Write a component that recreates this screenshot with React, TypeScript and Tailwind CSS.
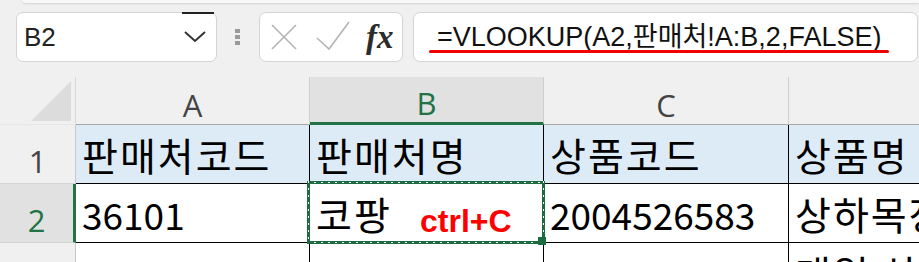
import React from "react"

const ui = { fontFamily: '"Liberation Sans", "Noto Sans CJK KR", sans-serif' }
const kr = { fontFamily: '"Noto Sans CJK KR", "Liberation Sans", sans-serif' }
const hdr = { fontFamily: '"Open Sans", "Liberation Sans", sans-serif' }

function Chevron() {
  return (
    <svg width="24" height="14" viewBox="0 0 24 14" fill="none">
      <path d="M2 2 L12 11 L22 2" stroke="#333" strokeWidth="2" />
    </svg>
  )
}

function CancelIcon() {
  return (
    <svg width="26" height="26" viewBox="0 0 26 26" fill="none">
      <path d="M1 1 L25 25 M25 1 L1 25" stroke="#b4b4b4" strokeWidth="1.6" />
    </svg>
  )
}

function CheckIcon() {
  return (
    <svg width="34" height="30" viewBox="0 0 34 30" fill="none">
      <path d="M1 17 L13 28 L33 1" stroke="#b4b4b4" strokeWidth="1.6" />
    </svg>
  )
}

function Corner() {
  return (
    <svg width="40" height="40" viewBox="0 0 40 40">
      <polygon points="40,0 40,40 0,40" fill="#dcdcdc" />
    </svg>
  )
}

function Toolbar() {
  return (
    <div className="flex items-start h-[63px] pt-[12px]">
      <div className="relative shrink-0 ml-[16px] w-[201px] h-[50px] bg-white border border-[#d4d4d4] rounded-[7px] flex items-center justify-between pl-[7px] pr-[9px]">
        <div className="absolute top-[-1px] left-[165px] w-[32px] h-[2px] bg-[#222]" />
        <span className="text-[26px] text-[#222] leading-none" style={ui}>B2</span>
        <Chevron />
      </div>
      <div className="shrink-0 ml-[18px] h-[50px] flex flex-col items-center justify-center gap-[2px]">
        <div className="w-[5px] h-[4px] bg-[#9a9a9a]" />
        <div className="w-[5px] h-[4px] bg-[#9a9a9a]" />
        <div className="w-[5px] h-[4px] bg-[#9a9a9a]" />
      </div>
      <div className="shrink-0 ml-[19px] w-[144px] h-[50px] bg-white border border-[#d4d4d4] rounded-[7px] flex items-center pl-[11px]">
        <CancelIcon />
        <div className="ml-[19px] mt-[-2px]">
          <CheckIcon />
        </div>
        <span
          className="ml-[16px] text-[33px] italic text-[#2b2b2b] leading-none font-bold"
          style={{ fontFamily: '"Liberation Serif", "DejaVu Serif", serif' }}
        >
          fx
        </span>
      </div>
      <div className="relative ml-[10px] flex-1 min-w-0 mr-[1px] h-[50px] bg-white border border-[#d4d4d4] rounded-[7px] flex items-center pl-[23px]">
        <span className="text-[27px] text-[#111] leading-none whitespace-nowrap" style={ui}>
          =VLOOKUP(A2,판매처!A:B,2,FALSE)
        </span>
        <div className="absolute left-[15px] top-[37px] w-[460px] h-[3px] rounded-full bg-[#f00000]" />
      </div>
    </div>
  )
}

function ColHeader({ label, active, w, last }: { label: string; active?: boolean; w: string; last?: boolean }) {
  return (
    <div
      className={
        "h-[48px] flex items-end justify-center pb-[3px] text-[31px] leading-none " +
        w +
        (last ? " min-w-0" : " shrink-0 border-r border-[#cfcfcf]") +
        (active
          ? " bg-[#e1e1e1] border-b-[3px] border-b-[#217346] text-[#217346]"
          : " bg-[#f0f0f0] border-b border-b-[#a6a6a6] text-[#444]")
      }
      style={hdr}
    >
      {label}
    </div>
  )
}

function RowHeader({ n, active }: { n: string; active?: boolean }) {
  return (
    <div
      className={
        "shrink-0 w-[76px] flex items-end justify-center pb-[6px] text-[31px] leading-none border-b " +
        (active
          ? "bg-[#e1e1e1] border-r-[3px] border-r-[#217346] border-b-[#d4d4d4] text-[#217346]"
          : "bg-[#f0f0f0] border-r border-r-[#c8c8c8] border-b-[#d4d4d4] text-[#444]")
      }
      style={hdr}
    >
      {n}
    </div>
  )
}

function Cell({
  w,
  children,
  blue,
  last,
  num,
  top,
}: {
  w: string
  children?: React.ReactNode
  blue?: boolean
  last?: boolean
  num?: boolean
  top?: boolean
}) {
  return (
    <div
      className={
        "relative flex items-center pl-[6px] border-b border-black text-black leading-none whitespace-nowrap " +
        w +
        (top ? " z-10" : "") +
        (num ? " text-[37px] pt-[2px]" : " text-[39px] tracking-[2px]") +
        (last ? " min-w-0 overflow-hidden" : " shrink-0 border-r") +
        (blue ? " bg-[#ddebf7]" : " bg-white")
      }
      style={kr}
    >
      {children}
    </div>
  )
}

// copy-mode outline: 3px green bars with a white dashed line running down the middle
function MarchingAnts() {
  return (
    <div className="absolute -left-[3px] -top-[3px] -right-[2px] -bottom-[2px] pointer-events-none">
      <div className="absolute left-0 right-0 top-0 h-[3px] bg-[#1d6b40] flex items-center">
        <div className="w-full h-[1px] bg-[repeating-linear-gradient(90deg,#ffffff_0px,#ffffff_2px,transparent_2px,transparent_7px)]" />
      </div>
      <div className="absolute left-0 right-0 bottom-0 h-[3px] bg-[#1d6b40] flex items-center">
        <div className="w-full h-[1px] bg-[repeating-linear-gradient(90deg,#ffffff_0px,#ffffff_2px,transparent_2px,transparent_7px)]" />
      </div>
      <div className="absolute top-0 bottom-0 left-0 w-[3px] bg-[#1d6b40] flex justify-center">
        <div className="h-full w-[1px] bg-[repeating-linear-gradient(180deg,#ffffff_0px,#ffffff_2px,transparent_2px,transparent_7px)]" />
      </div>
      <div className="absolute top-0 bottom-0 right-0 w-[3px] bg-[#1d6b40] flex justify-center">
        <div className="h-full w-[1px] bg-[repeating-linear-gradient(180deg,#ffffff_0px,#ffffff_2px,transparent_2px,transparent_7px)]" />
      </div>
    </div>
  )
}

export default function App() {
  return (
    <div className="w-[919px] h-[262px] overflow-hidden bg-[#f0f0f0]">
      <div className="h-0">
        <div className="ml-[22px] h-[3px] rounded-bl-[6px] bg-[#f8f8f8] shadow-[0_1px_2px_rgba(0,0,0,0.12)]" />
      </div>
      <Toolbar />
      <div className="h-[14px]" />
      <div className="flex">
        <div className="shrink-0 w-[76px] h-[48px] flex items-end justify-end pr-[4px] pb-[3px] border-r border-[#d8d8d8] border-b border-b-[#e6e6e6]">
          <Corner />
        </div>
        <ColHeader label="A" w="w-[234px]" />
        <ColHeader label="B" w="w-[234px]" active />
        <ColHeader label="C" w="w-[245px]" />
        <ColHeader label="" w="flex-1" last />
      </div>
      <div className="flex h-[59px]">
        <RowHeader n="1" />
        <Cell w="w-[234px]" blue>판매처코드</Cell>
        <Cell w="w-[234px]" blue>판매처명</Cell>
        <Cell w="w-[245px]" blue>상품코드</Cell>
        <Cell w="flex-1" blue last>상품명</Cell>
      </div>
      <div className="flex h-[59px]">
        <RowHeader n="2" active />
        <Cell w="w-[234px]" num>36101</Cell>
        <Cell w="w-[234px]" top>
          코팡
          <MarchingAnts />
          <div className="absolute right-[-3px] bottom-[-3px] w-[8px] h-[8px] bg-[#1d6b40]" />
          <span
            className="absolute left-[110px] top-[21px] text-[32px] font-bold tracking-normal text-[#ff0000] leading-none"
            style={ui}
          >
            ctrl+C
          </span>
        </Cell>
        <Cell w="w-[245px]" num>2004526583</Cell>
        <Cell w="flex-1" last>상하목장</Cell>
      </div>
      <div className="flex h-[59px]">
        <RowHeader n="3" />
        <Cell w="w-[234px]" num>36101</Cell>
        <Cell w="w-[234px]" />
        <Cell w="w-[245px]" num>1305727709</Cell>
        <Cell w="flex-1" last>매일 상하</Cell>
      </div>
    </div>
  )
}
